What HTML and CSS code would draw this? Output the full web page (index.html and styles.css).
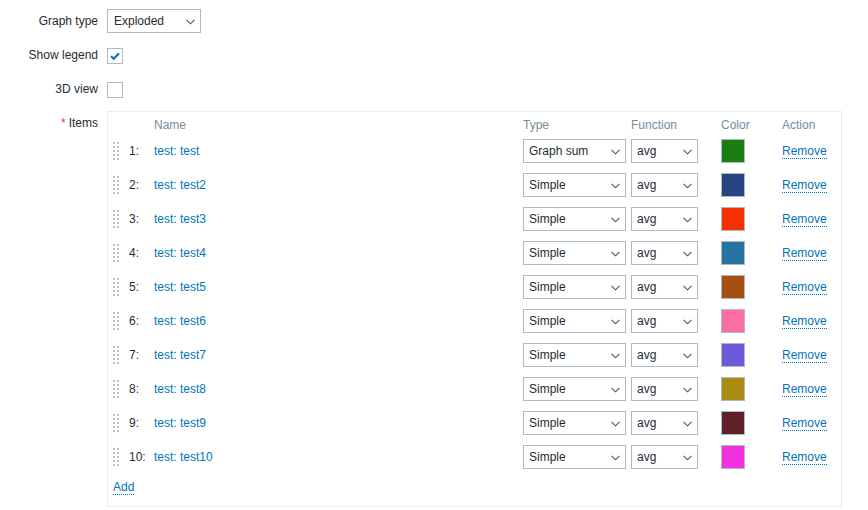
FILE: index.html
```html
<!DOCTYPE html>
<html>
<head>
<meta charset="utf-8">
<link rel="stylesheet" href="styles.css">
</head>
<body>
<div class="form">
  <div class="label">Graph type</div>
  <div class="field">
    <div class="select sel-graph"><span>Exploded</span><svg class="chev" width="9" height="6" viewBox="0 0 9 6"><path d="M0.5 0.8 L4.5 4.8 L8.5 0.8" fill="none" stroke="#555" stroke-width="1.1"/></svg></div>
  </div>

  <div class="label">Show legend</div>
  <div class="field">
    <div class="checkbox"><svg width="14" height="14" viewBox="0 0 14 14"><path d="M3 7.2 L5.8 9.8 L11 4.2" fill="none" stroke="#0275b8" stroke-width="2.2"/></svg></div>
  </div>

  <div class="label">3D view</div>
  <div class="field">
    <div class="checkbox"></div>
  </div>

  <div class="label label-top"><span class="req">*</span> Items</div>
  <div class="items">
    <div class="grid">
      <div class="hd"></div>
      <div class="hd"></div>
      <div class="hd">Name</div>
      <div class="hd">Type</div>
      <div class="hd">Function</div>
      <div class="hd">Color</div>
      <div class="hd">Action</div>
    </div>
    <div class="rows" id="rows"></div>
    <div class="footer"><a class="link">Add</a></div>
  </div>
</div>
<script src="script.js"></script>
</body>
</html>
```
FILE: script.js
```js
var data = [
  ["test: test", "Graph sum", "1A7C11"],
  ["test: test2", "Simple", "274482"],
  ["test: test3", "Simple", "F63100"],
  ["test: test4", "Simple", "2774A4"],
  ["test: test5", "Simple", "A54F10"],
  ["test: test6", "Simple", "FC6EA3"],
  ["test: test7", "Simple", "6C59DC"],
  ["test: test8", "Simple", "AC8C14"],
  ["test: test9", "Simple", "611F27"],
  ["test: test10", "Simple", "F230E0"]
];
var chev = '<svg class="chev" width="9" height="6" viewBox="0 0 9 6"><path d="M0.5 0.8 L4.5 4.8 L8.5 0.8" fill="none" stroke="#555" stroke-width="1.1"/></svg>';
var html = "";
data.forEach(function (d, i) {
  html += '<div class="row">' +
    '<div class="c-handle"><div class="handle"></div></div>' +
    '<div class="c-num">' + (i + 1) + ':</div>' +
    '<div class="c-name"><a class="name">' + d[0] + '</a></div>' +
    '<div class="c-type"><div class="select sel-type"><span>' + d[1] + '</span>' + chev + '</div></div>' +
    '<div class="c-func"><div class="select sel-func"><span>avg</span>' + chev + '</div></div>' +
    '<div class="c-color"><div class="swatch" style="background:#' + d[2] + '"></div></div>' +
    '<div class="c-action"><a class="link">Remove</a></div>' +
    '</div>';
});
document.getElementById("rows").innerHTML = html;
```
FILE: styles.css
```css
html, body {
  margin: 0;
  padding: 0;
  background: #ffffff;
}
body {
  font-family: "Liberation Sans", Arial, sans-serif;
  font-size: 12px;
  line-height: 14px;
  color: #1f2c33;
}
.form {
  display: grid;
  grid-template-columns: 98px 735px;
  column-gap: 9px;
  row-gap: 10px;
  padding-top: 9px;
  grid-auto-rows: minmax(24px, auto);
}
.label {
  text-align: right;
  display: flex;
  align-items: center;
  justify-content: flex-end;
  height: 24px;
}
.label-top {
  height: 23px;
}
.req {
  color: #e33734;
  margin-right: 3px;
}
.field {
  display: flex;
  align-items: center;
  height: 24px;
}
.select {
  box-sizing: border-box;
  height: 24px;
  border: 1px solid #acbbc2;
  background: #fff;
  display: flex;
  align-items: center;
  justify-content: space-between;
  padding: 0 5px 0 6px;
}
.chev {
  display: block;
  margin-top: 1px;
}
.sel-graph { width: 94px; }
.sel-type { width: 103px; padding-left: 5px; }
.sel-func { width: 67px; padding-left: 5px; }
.checkbox {
  box-sizing: border-box;
  width: 16px;
  height: 16px;
  border: 1px solid #acbbc2;
  background: #fff;
  display: flex;
  align-items: center;
  justify-content: center;
  margin-top: 1px;
}
.checkbox svg { display: block; }
.items {
  box-sizing: border-box;
  border: 1px solid #ebeef0;
  height: 396px;
}
.grid, .row {
  display: grid;
  grid-template-columns: 21px 25px 369px 108px 90px 61px 1fr;
}
.grid {
  height: 27px;
}
.hd {
  color: #768d99;
  padding-top: 6px;
}
.rows {
  display: flex;
  flex-direction: column;
  gap: 10px;
}
.row {
  height: 24px;
  align-items: center;
}
.c-handle {
  padding-left: 5px;
  display: flex;
  align-items: center;
}
.handle {
  width: 6px;
  height: 18px;
  background: linear-gradient(90deg, #b7c3c9 0 2px, transparent 2px 4px, #b7c3c9 4px 6px);
  -webkit-mask: linear-gradient(180deg, #000 0 2px, transparent 2px 4px) 0 0 / 6px 4px repeat-y;
  mask: linear-gradient(180deg, #000 0 2px, transparent 2px 4px) 0 0 / 6px 4px repeat-y;
}
.c-num {
  color: #1f2c33;
}
.name {
  color: #0275b8;
  text-decoration: none;
}
.link {
  color: #0275b8;
  text-decoration: none;
  border-bottom: 1px dotted #0275b8;
  cursor: pointer;
}
.swatch {
  box-sizing: border-box;
  width: 24px;
  height: 24px;
  border: 1px solid #acbbc2;
}
.footer {
  padding: 11px 0 0 5px;
}
```
